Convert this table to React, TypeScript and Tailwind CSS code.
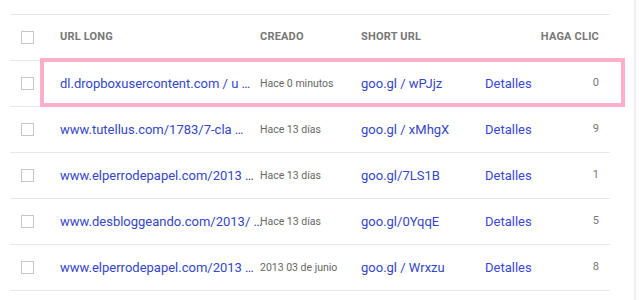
import React from "react";

type Row = {
  longUrl: string;
  created: string;
  shortUrl: string;
  clicks: number;
};

const rows: Row[] = [
  { longUrl: "dl.dropboxusercontent.com / u …", created: "Hace 0 minutos", shortUrl: "goo.gl / wPJjz", clicks: 0 },
  { longUrl: "www.tutellus.com/1783/7-cla …", created: "Hace 13 días", shortUrl: "goo.gl / xMhgX", clicks: 9 },
  { longUrl: "www.elperrodepapel.com/2013 …", created: "Hace 13 días", shortUrl: "goo.gl/7LS1B", clicks: 1 },
  { longUrl: "www.desbloggeando.com/2013/ …", created: "Hace 13 días", shortUrl: "goo.gl/0YqqE", clicks: 5 },
  { longUrl: "www.elperrodepapel.com/2013 …", created: "2013 03 de junio", shortUrl: "goo.gl / Wrxzu", clicks: 8 },
];

const gridCols = "grid grid-cols-[50px_200px_101px_124px_1fr_auto] items-center h-[46px] border-b border-[#e8e8e8]";

function Checkbox() {
  return <span className="ml-[11px] block h-[13px] w-[13px] border border-[#c6c6c6] bg-white" />;
}

export default function App() {
  return (
    <div className="relative h-[300px] w-[639px] overflow-hidden bg-white font-['Roboto',_'Liberation_Sans',_sans-serif]">
      <div className="h-full w-[636px] border-r-2 border-[#efefef] pt-[14px]">
        <div className="ml-[10px] w-[600px] border-t border-[#e8e8e8]">
          {/* header */}
          <div className={gridCols}>
            <Checkbox />
            <span className="text-[11px] font-bold text-[#777] tracking-[0.2px]">URL LONG</span>
            <span className="text-[11px] font-bold text-[#777] tracking-[0.2px]">CREADO</span>
            <span className="text-[11px] font-bold text-[#777] tracking-[0.2px]">SHORT URL</span>
            <span />
            <span className="pr-[11px] text-right text-[11px] font-bold text-[#777] tracking-[0.2px]">HAGA CLIC</span>
          </div>

          {rows.map((r, i) => (
            <div key={i} className={gridCols}>
              <Checkbox />
              <span className="whitespace-nowrap text-[13px] text-[#3346c8]">{r.longUrl}</span>
              <span className="whitespace-nowrap text-[10.5px] text-[#666]">{r.created}</span>
              <span className="whitespace-nowrap text-[13px] text-[#3346c8]">{r.shortUrl}</span>
              <span className="text-[13px] text-[#3a47d6]">Detalles</span>
              <span className="pr-[11px] text-right text-[11px] text-[#777]">{r.clicks}</span>
            </div>
          ))}
        </div>
      </div>

      {/* highlight around the newest link */}
      <div className="pointer-events-none absolute left-[40px] top-[58px] h-[49px] w-[585px] border-4 border-[#fdafca]" />
    </div>
  );
}
